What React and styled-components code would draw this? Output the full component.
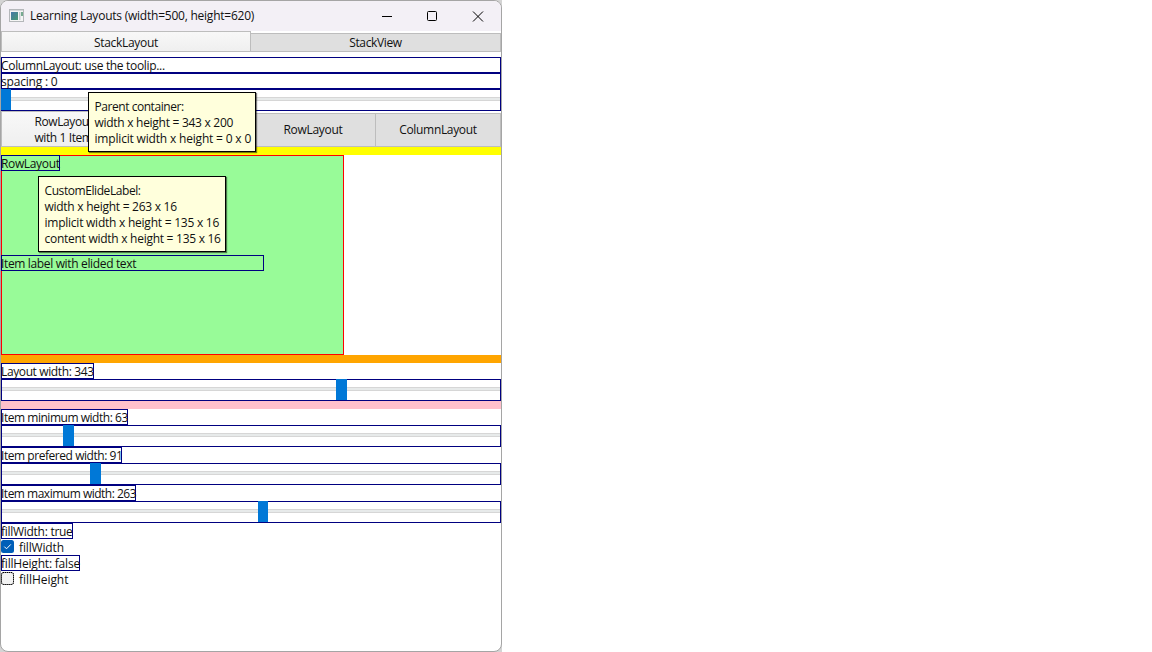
import React from 'react';
import styled, { createGlobalStyle } from 'styled-components';

const GlobalStyle = createGlobalStyle`
  * { box-sizing: border-box; }
  body {
    margin: 0;
    background: #fff;
    color: #111;
    font: 12px/16px "Open Sans", "Noto Sans", sans-serif;
  }
`;

const Desktop = styled.div`
  width: 502px;
  height: 652px;
  background: #d4d4d4;
`;

const Window = styled.div`
  position: relative;
  display: flex;
  flex-direction: column;
  height: 652px;
  border: 1px solid #a5a5a5;
  border-radius: 8px;
  background: #fff;
  overflow: hidden;
`;

const RightEdge = styled.div`
  position: absolute;
  top: 52px;
  right: -1px;
  width: 1px;
  height: 402px;
  background: #476a98;
`;

const TitleBar = styled.header`
  display: flex;
  align-items: center;
  flex: none;
  height: 30px;
  padding-left: 8px;
  background: #f3f0f6;
`;

const Title = styled.span`
  flex: 1;
  margin-left: 5px;
  white-space: nowrap;
`;

const Controls = styled.div`
  display: flex;
  svg { width: 46px; height: 29px; display: block; }
`;

const Text = styled.span`
  white-space: nowrap;
  letter-spacing: ${(p) => p.$ls || 0}px;
`;

const TabBar = styled.div`
  display: flex;
  align-items: flex-end;
  flex: none;
  height: ${(p) => p.$h}px;
  margin-bottom: ${(p) => p.$gap || 0}px;
`;

const Tab = styled.div`
  display: flex;
  align-items: center;
  justify-content: center;
  width: ${(p) => p.$w}px;
  height: ${(p) => (p.$active ? '100%' : 'calc(100% - 2px)')};
  padding-top: ${(p) => (p.$active ? 2 : 0)}px;
  border: 1px solid #bdbdbd;
  border-left-width: ${(p) => (p.$active ? 1 : 0)}px;
  background: ${(p) => (p.$active ? 'linear-gradient(#f8f8f8, #efefef)' : '#dfdfdf')};
`;

const Label = styled.div`
  flex: none;
  width: ${(p) => (p.$w ? `${p.$w}px` : '100%')};
  height: 16px;
  border: 1px solid #000080;
  line-height: 16px;
  white-space: nowrap;
  span { margin-left: -1px; }
`;

const SliderBox = styled.div`
  display: grid;
  align-items: center;
  flex: none;
  height: 22px;
  border: 1px solid #000080;
`;

const Track = styled.div`
  grid-area: 1 / 1;
  height: 4px;
  margin-bottom: 2px;
  border: solid #d6d6d6;
  border-width: 1px 0;
  background: #e7eaea;
`;

const Handle = styled.div`
  grid-area: 1 / 1;
  width: ${(p) => p.$w || 11}px;
  height: 21px;
  margin: -1px 0 0 ${(p) => p.$x - 2}px;
  background: #0078d7;
`;

const Band = styled.div`
  flex: none;
  height: 8px;
  background: ${(p) => p.$color};
`;

const Green = styled.div`
  display: flex;
  flex-direction: column;
  flex: none;
  width: 343px;
  height: 200px;
  border: 1px solid #ff0000;
  background: #98fb98;
`;

const Pull = styled.div`
  margin: ${(p) => p.$top}px 0 0 -1px;
`;

const CheckRow = styled.div`
  display: flex;
  flex: none;
  height: 16px;
  gap: 5px;
  line-height: 18px;
  svg { width: 13px; height: 13px; margin-top: 1px; display: block; }
`;

const Tooltip = styled.div`
  position: absolute;
  left: ${(p) => p.$x}px;
  top: ${(p) => p.$y}px;
  width: ${(p) => p.$w}px;
  padding: 6px 0 4px 5.5px;
  border: 1px solid #000;
  background: #ffffdc;
  box-shadow: 1px 1px 1px rgba(0, 0, 0, 0.5);
  div { height: 16px; line-height: 16px; }
`;

const Slider = ({ x, w }) => (
  <SliderBox>
    <Track />
    <Handle $x={x} $w={w} />
  </SliderBox>
);

const BoxLabel = ({ w, ls, children }) => (
  <Label $w={w}><Text $ls={ls}>{children}</Text></Label>
);

const Lines = ({ items }) => items.map(([t, ls]) => (
  <div key={t}><Text $ls={ls}>{t}</Text></div>
));

export default function App() {
  return (
    <Desktop>
      <GlobalStyle />
      <Window>
        <TitleBar>
          <svg width="16" height="14" viewBox="0 0 16 14">
            <defs>
              <linearGradient id="app" x1="0" y1="0" x2="1" y2="1">
                <stop offset="0" stopColor="#4678a8" />
                <stop offset="1" stopColor="#4a9b72" />
              </linearGradient>
            </defs>
            <rect x="0.5" y="0.5" width="14" height="12" fill="#f5f5f5" stroke="#b4b7ba" />
            <path d="M1 1.5h13" stroke="#d5d8da" />
            <rect x="2" y="3" width="7" height="8" fill="url(#app)" />
            <rect x="10" y="3" width="1.5" height="8" fill="#c3cdd0" />
            <rect x="12" y="3" width="2" height="4" fill="#76aa90" />
          </svg>
          <Title><Text $ls={-0.23}>Learning Layouts (width=500, height=620)</Text></Title>
          <Controls>
            <svg viewBox="0 0 46 29"><path d="M19 14.5h10" stroke="#000" /></svg>
            <svg viewBox="0 0 46 29"><rect x="18.5" y="9.5" width="9" height="9" rx="1" fill="none" stroke="#000" /></svg>
            <svg viewBox="0 0 46 29"><path d="M18 9.5l10 10M28 9.5l-10 10" stroke="#000" /></svg>
          </Controls>
        </TitleBar>
        <TabBar $h={21} $gap={5}>
          <Tab $active $w={250}><Text $ls={-0.3}>StackLayout</Text></Tab>
          <Tab $w={250}><Text $ls={-0.35}>StackView</Text></Tab>
        </TabBar>
        <BoxLabel ls={-0.32}>ColumnLayout: use the toolip...</BoxLabel>
        <BoxLabel ls={-0.2}>spacing : 0</BoxLabel>
        <Slider x={1} w={10} />
        <TabBar $h={36}>
          <Tab $active $w={125}><Text $ls={-0.4}>RowLayout<br />with 1 Item</Text></Tab>
          <Tab $w={125} />
          <Tab $w={125}><Text $ls={-0.3}>RowLayout</Text></Tab>
          <Tab $w={125}><Text $ls={-0.33}>ColumnLayout</Text></Tab>
        </TabBar>
        <Band $color="#ffff00" />
        <Green>
          <Pull $top={-1}><BoxLabel w={59} ls={-0.35}>RowLayout</BoxLabel></Pull>
          <Pull $top={84}><BoxLabel w={263} ls={-0.35}>Item label with elided text</BoxLabel></Pull>
        </Green>
        <Band $color="#ffa500" />
        <BoxLabel w={93} ls={-0.38}>Layout width: 343</BoxLabel>
        <Slider x={336} />
        <Band $color="#ffc0cb" />
        <BoxLabel w={127} ls={-0.47}>Item minimum width: 63</BoxLabel>
        <Slider x={63} />
        <BoxLabel w={121} ls={-0.45}>Item prefered width: 91</BoxLabel>
        <Slider x={90} />
        <BoxLabel w={135} ls={-0.5}>Item maximum width: 263</BoxLabel>
        <Slider x={258} w={10} />
        <BoxLabel w={72} ls={-0.28}>fillWidth: true</BoxLabel>
        <CheckRow>
          <svg viewBox="0 0 13 13">
            <rect width="13" height="13" rx="2.5" fill="#005fb8" />
            <path d="M3.3 6.6l2.2 2.2 4.3-4.4" fill="none" stroke="#fff" />
          </svg>
          <Text $ls={-0.15}>fillWidth</Text>
        </CheckRow>
        <BoxLabel w={79} ls={-0.2}>fillHeight: false</BoxLabel>
        <CheckRow>
          <svg viewBox="0 0 13 13">
            <rect x="0.5" y="0.5" width="12" height="12" rx="2.5" fill="#f3f3f3" stroke="#858585" />
            <rect x="0.5" y="0.5" width="12" height="12" rx="1.5" fill="none" stroke="#000" strokeDasharray="1 1" />
          </svg>
          <Text $ls={-0.05}>fillHeight</Text>
        </CheckRow>
        <Tooltip $x={87} $y={91} $w={168}>
          <Lines
            items={[
              ['Parent container:', -0.45],
              ['width x height = 343 x 200', -0.28],
              ['implicit width x height = 0 x 0', -0.18],
            ]}
          />
        </Tooltip>
        <Tooltip $x={37} $y={175} $w={188}>
          <Lines
            items={[
              ['CustomElideLabel:', -0.42],
              ['width x height = 263 x 16', -0.27],
              ['implicit width x height = 135 x 16', -0.24],
              ['content width x height = 135 x 16', -0.27],
            ]}
          />
        </Tooltip>
        <RightEdge />
      </Window>
    </Desktop>
  );
}
